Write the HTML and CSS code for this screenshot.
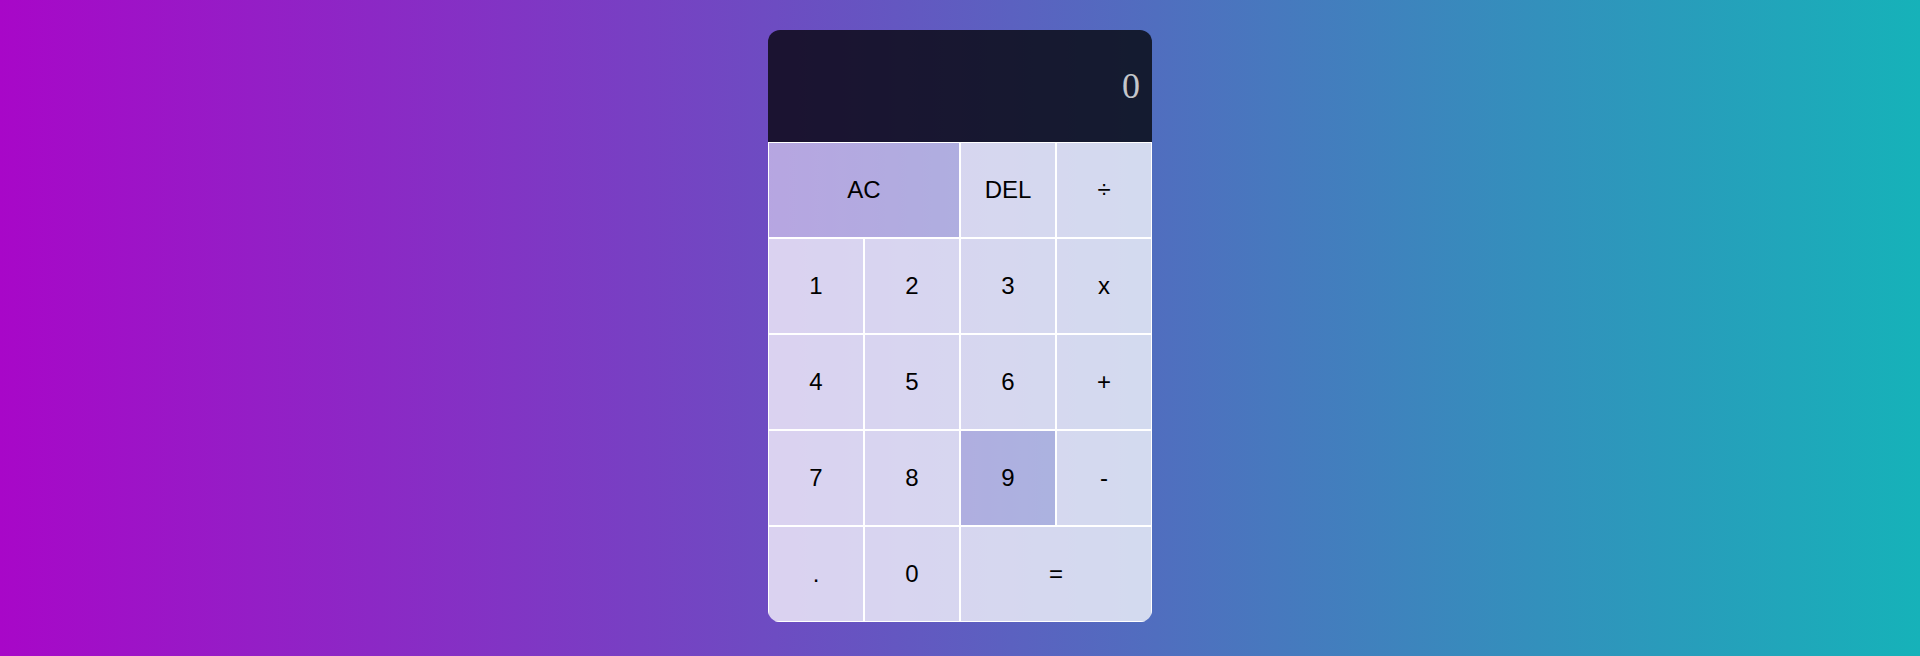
FILE: index.html
```html
<!DOCTYPE html>
<html lang="en">
<head>
<meta charset="utf-8">
<title>Calculator</title>
<link rel="stylesheet" href="styles.css">
</head>
<body>
<div class="calculator">
  <div class="output"><div class="current">0</div></div>
  <button class="btn span-two active">AC</button>
  <button class="btn">DEL</button>
  <button class="btn">÷</button>
  <button class="btn">1</button>
  <button class="btn">2</button>
  <button class="btn">3</button>
  <button class="btn">x</button>
  <button class="btn">4</button>
  <button class="btn">5</button>
  <button class="btn">6</button>
  <button class="btn">+</button>
  <button class="btn">7</button>
  <button class="btn">8</button>
  <button class="btn active">9</button>
  <button class="btn">-</button>
  <button class="btn">.</button>
  <button class="btn">0</button>
  <button class="btn span-two">=</button>
</div>
</body>
</html>
```
FILE: styles.css
```css
* { box-sizing: border-box; }
html, body { margin: 0; padding: 0; height: 100%; }
body {
  background: linear-gradient(to right, #a807c8, #16b2b9);
  font-family: "Liberation Serif", serif;
  display: flex;
  justify-content: center;
  align-items: flex-start;
  padding-top: 30px;
}
.calculator {
  display: grid;
  grid-template-columns: repeat(4, 96px);
  grid-template-rows: 112px repeat(5, 96px);
  border-radius: 12px;
  overflow: hidden;
}
.output {
  grid-column: 1 / -1;
  background: rgba(0, 0, 0, 0.75);
  display: flex;
  align-items: center;
  justify-content: flex-end;
  padding: 12px;
}
.current {
  color: rgba(255, 255, 255, 0.75);
  font-size: 36px;
  font-family: "Liberation Serif", serif;
}
.btn {
  font-family: "Liberation Sans", Arial, sans-serif;
  font-size: 24px;
  color: #000;
  border: 1px solid #fff;
  outline: none;
  background: rgba(255, 255, 255, 0.75);
  cursor: pointer;
  padding: 0;
}
.btn.active { background: rgba(255, 255, 255, 0.5); }
.span-two { grid-column: span 2; }
```
